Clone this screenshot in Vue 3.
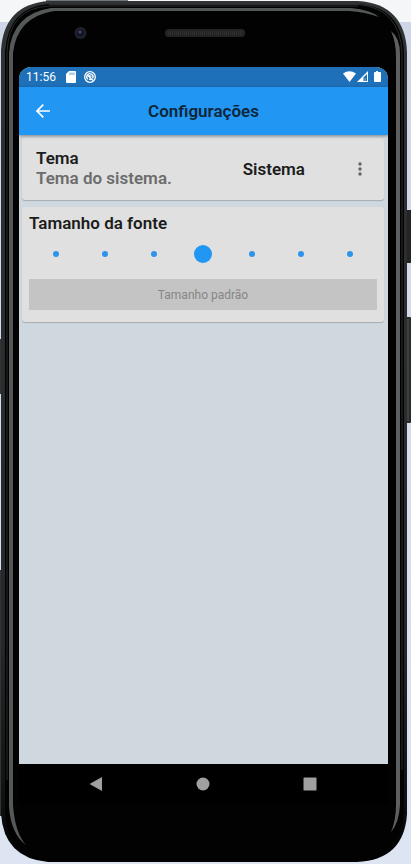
<script setup>
import { ref } from 'vue'

const sizes = [
  'Minúsculo',
  'Muito pequeno',
  'Pequeno',
  'Padrão',
  'Grande',
  'Muito grande',
  'Enorme',
]
const selected = ref(3)
</script>

<template>
  <div class="device">
    <svg class="shell" viewBox="0 0 411 864" preserveAspectRatio="none" aria-hidden="true">
      <defs>
        <linearGradient id="rim" x1="0" y1="0" x2="0" y2="1">
          <stop offset="0" stop-color="#303334" />
          <stop offset="0.75" stop-color="#25282a" />
          <stop offset="0.92" stop-color="#101214" />
          <stop offset="1" stop-color="#000" />
        </linearGradient>
        <linearGradient id="side" x1="0" y1="0" x2="0" y2="1">
          <stop offset="0" stop-color="#cdd5e6" />
          <stop offset="1" stop-color="#dde5f3" />
        </linearGradient>
      </defs>
      <rect width="411" height="864" fill="url(#side)" />
      <rect width="411" height="22" fill="#f4f6f8" />
      <rect x="46" y="0" width="82" height="3" fill="#73777a" />
      <rect x="0" y="339" width="4" height="55" fill="#303434" />
      <rect x="0" y="570" width="4" height="246" fill="#303434" />
      <rect x="406" y="210" width="5" height="53" fill="#242424" />
      <rect x="406" y="317" width="5" height="106" rx="1" fill="#292a2a" />
      <path d="M408 319V421" stroke="#555757" />
      <path d="M49 1H358Q405 4 407 52V814Q404 860 357 862H48Q4 858 1 814V50Q4 4 49 1Z" fill="url(#rim)" />
      <path d="M49 4H358Q402 7 404 53V812Q401 858 357 861H49Q7 856 5 812V52Q8 7 49 4Z" fill="#020202" />
      <path d="M49 4.500H358Q400 8 402 53V770" fill="none" stroke="#2b2e2e" />
      <path d="M7 780V52Q9 8 49 6H358" fill="none" stroke="#292b2b" />
      <path d="M9 807V53Q12 14 51 8H351Q371 10 379 17Q365 12 349 11H54Q17 17 13 53V805Q15 833 26 845Q11 834 9 807Z" fill="#555858" />
      <path d="M391 31Q400 38 400 54V805Q399 823 391 832Q396 820 396 805V57Q396 42 391 31Z" fill="#5d5f60" />
      <circle cx="80.500" cy="33" r="6" fill="#20212a" />
      <circle cx="80.500" cy="33" r="3.500" fill="#101526" />
      <circle cx="80" cy="32" r="1.500" fill="#40506c" />
      <rect x="165" y="29" width="80" height="8" rx="3.500" fill="#242424" />
      <path d="M168 33H242" stroke="#303030" stroke-width="4" stroke-dasharray="1 1" />
    </svg>

    <div class="screen">
      <div class="status">
        <span class="clock">11:56</span>
        <svg class="sd" viewBox="0 0 10 12" aria-hidden="true">
          <path d="M3 0H9Q10 0 10 1V11Q10 12 9 12H1Q0 12 0 11V3Z" fill="#fff" />
          <path d="M4 1.500V4M6 1.500V4M8 1.500V4" stroke="#1e70b8" stroke-width="0.700" />
        </svg>
        <svg class="debug" viewBox="0 0 12 12" aria-hidden="true">
          <circle cx="6" cy="6" r="5.300" fill="none" stroke="#fff" stroke-width="1.300" />
          <path d="M3.800 8.200A3.100 3.100 0 1 1 8.600 7.400M3.500 4L9 9.500M5 7.900Q6 9 7.300 8.300M5 4.500L7.500 5.500" fill="none" stroke="#fff" stroke-width="1.300" />
        </svg>
        <svg class="signals" viewBox="0 0 38 12" aria-hidden="true">
          <path d="M0 2.500Q6.500-2 13 2.500L6.500 11Z" fill="#fff" />
          <path d="M25 0V11H14Z" fill="#fff" />
          <path d="M20.500 6.500L24 3V10H20.500Z" fill="#1e70b8" />
          <path d="M21.500 10V7H23V10Z" fill="#fff" opacity="0.300" />
          <path d="M33 0H35V1H37Q38 1 38 2V10Q38 11 37 11H32Q31 11 31 10V2Q31 1 32 1H33Z" fill="#fff" />
        </svg>
      </div>

      <header class="appbar">
        <button class="icon-button" type="button" aria-label="Voltar">
          <svg class="back" viewBox="0 0 14 14" aria-hidden="true">
            <path d="M14 7H1M7.300 0.700L1 7L7.300 13.300" fill="none" stroke="#fff" stroke-width="1.700" />
          </svg>
        </button>
        <h1>Configurações</h1>
      </header>

      <main>
        <section class="card theme">
          <div class="theme-text">
            <h2>Tema</h2>
            <p>Tema do sistema.</p>
          </div>
          <span class="value">Sistema</span>
          <button class="icon-button" type="button" aria-label="Escolher tema">
            <svg class="more" viewBox="0 0 4 14" aria-hidden="true">
              <g fill="#646464">
                <circle cx="2" cy="2" r="1.700" />
                <circle cx="2" cy="7" r="1.700" />
                <circle cx="2" cy="12" r="1.700" />
              </g>
            </svg>
          </button>
        </section>

        <section class="card font">
          <h2 id="font-title">Tamanho da fonte</h2>
          <div class="sizes" role="radiogroup" aria-labelledby="font-title">
            <label v-for="(size, index) in sizes" :key="size">
              <input v-model="selected" type="radio" name="size" :value="index" :aria-label="size" />
            </label>
          </div>
          <button class="reset" type="button" :disabled="selected === 3" @click="selected = 3">
            Tamanho padrão
          </button>
        </section>
      </main>

      <nav aria-label="Sistema">
        <button type="button" aria-label="Voltar">
          <svg viewBox="0 0 14 14" aria-hidden="true"><path d="M0.500 7L13 0V14Z" fill="#a0a0a0" /></svg>
        </button>
        <button type="button" aria-label="Início">
          <svg viewBox="0 0 14 14" aria-hidden="true"><circle cx="7" cy="7" r="6.500" fill="#a0a0a0" /></svg>
        </button>
        <button type="button" aria-label="Recentes">
          <svg viewBox="0 0 14 14" aria-hidden="true"><rect x="0.500" y="0.500" width="13" height="13" rx="0.500" fill="#a0a0a0" /></svg>
        </button>
      </nav>
    </div>
  </div>
</template>

<style>
body {
  margin: 0;
}
</style>

<style scoped>
* {
  box-sizing: border-box;
}

.device {
  position: relative;
  display: flex;
  min-height: 100vh;
  padding: 67px 23px 59px 19px;
  font-family: Roboto, "Liberation Sans", sans-serif;
  color: #1c1c1c;
}

.shell {
  position: absolute;
  inset: 0;
  width: 100%;
  height: 100%;
}

.screen {
  position: relative;
  display: flex;
  flex: 1;
  flex-direction: column;
  min-width: 0;
  overflow: hidden;
  border-radius: 12px 12px 0 0;
  background: #cfd8de;
}

.status {
  display: flex;
  align-items: center;
  height: 20px;
  padding: 0 7px;
  background: #1e70b8;
  color: #fff;
}

.clock {
  font-size: 12px;
  line-height: 20px;
}

.sd {
  width: 10px;
  height: 12px;
  margin-left: 10px;
}

.debug {
  width: 12px;
  height: 12px;
  margin-left: 8px;
}

.signals {
  width: 38px;
  height: 12px;
  margin-left: auto;
}

button {
  padding: 0;
  border: 0;
  background: none;
  font: inherit;
}

svg {
  display: block;
}

.icon-button {
  display: grid;
  place-items: center;
  width: 48px;
  height: 48px;
}

.appbar {
  position: relative;
  display: grid;
  grid-template-columns: 48px 1fr 48px;
  align-items: center;
  height: 48px;
  background: #2196f3;
  box-shadow: 0 1px 3px rgba(0, 0, 0, 0.4);
}

.back {
  width: 14px;
  height: 14px;
}

h1,
h2,
p {
  margin: 0;
}

h1,
h2,
p,
.value {
  font-size: 17px;
  font-weight: 600;
  line-height: 20px;
}

h1 {
  color: #0f263a;
  text-align: center;
}

main {
  display: flex;
  flex: 1;
  flex-direction: column;
  gap: 7px;
  padding: 3px 4px 3px 3px;
}

.card {
  border-radius: 3px;
  background: #e0e0e0;
  box-shadow: 0 1px 1px rgba(0, 0, 0, 0.2);
}

.theme {
  display: flex;
  align-items: center;
  height: 62px;
  padding-left: 14px;
}

.theme-text {
  flex: 1;
  padding-bottom: 2px;
}

p {
  color: #6c6c6c;
}

.value {
  margin-right: 31px;
}

.more {
  width: 4px;
  height: 14px;
}

.font {
  padding: 6px 7px 12px;
}

.sizes {
  display: flex;
  height: 40px;
  margin-top: 1px;
  padding: 0 2px;
}

.sizes label {
  display: grid;
  flex: 1;
  place-items: center;
}

input {
  appearance: none;
  width: 6px;
  height: 6px;
  margin: 0;
  border-radius: 50%;
  background: #2e93ea;
}

input:checked {
  width: 18px;
  height: 18px;
  background: #2196f3;
}

.reset {
  display: block;
  width: 100%;
  height: 31px;
  margin-top: 5px;
  background: #c4c4c4;
  color: #868686;
  font-size: 12px;
  font-weight: 400;
}

nav {
  display: flex;
  justify-content: center;
  gap: 59px;
  height: 41px;
  padding: 0 2px 2px 0;
  background: #000;
}

nav button {
  display: grid;
  place-items: center;
  width: 48px;
}

nav svg {
  width: 14px;
  height: 14px;
}
</style>
